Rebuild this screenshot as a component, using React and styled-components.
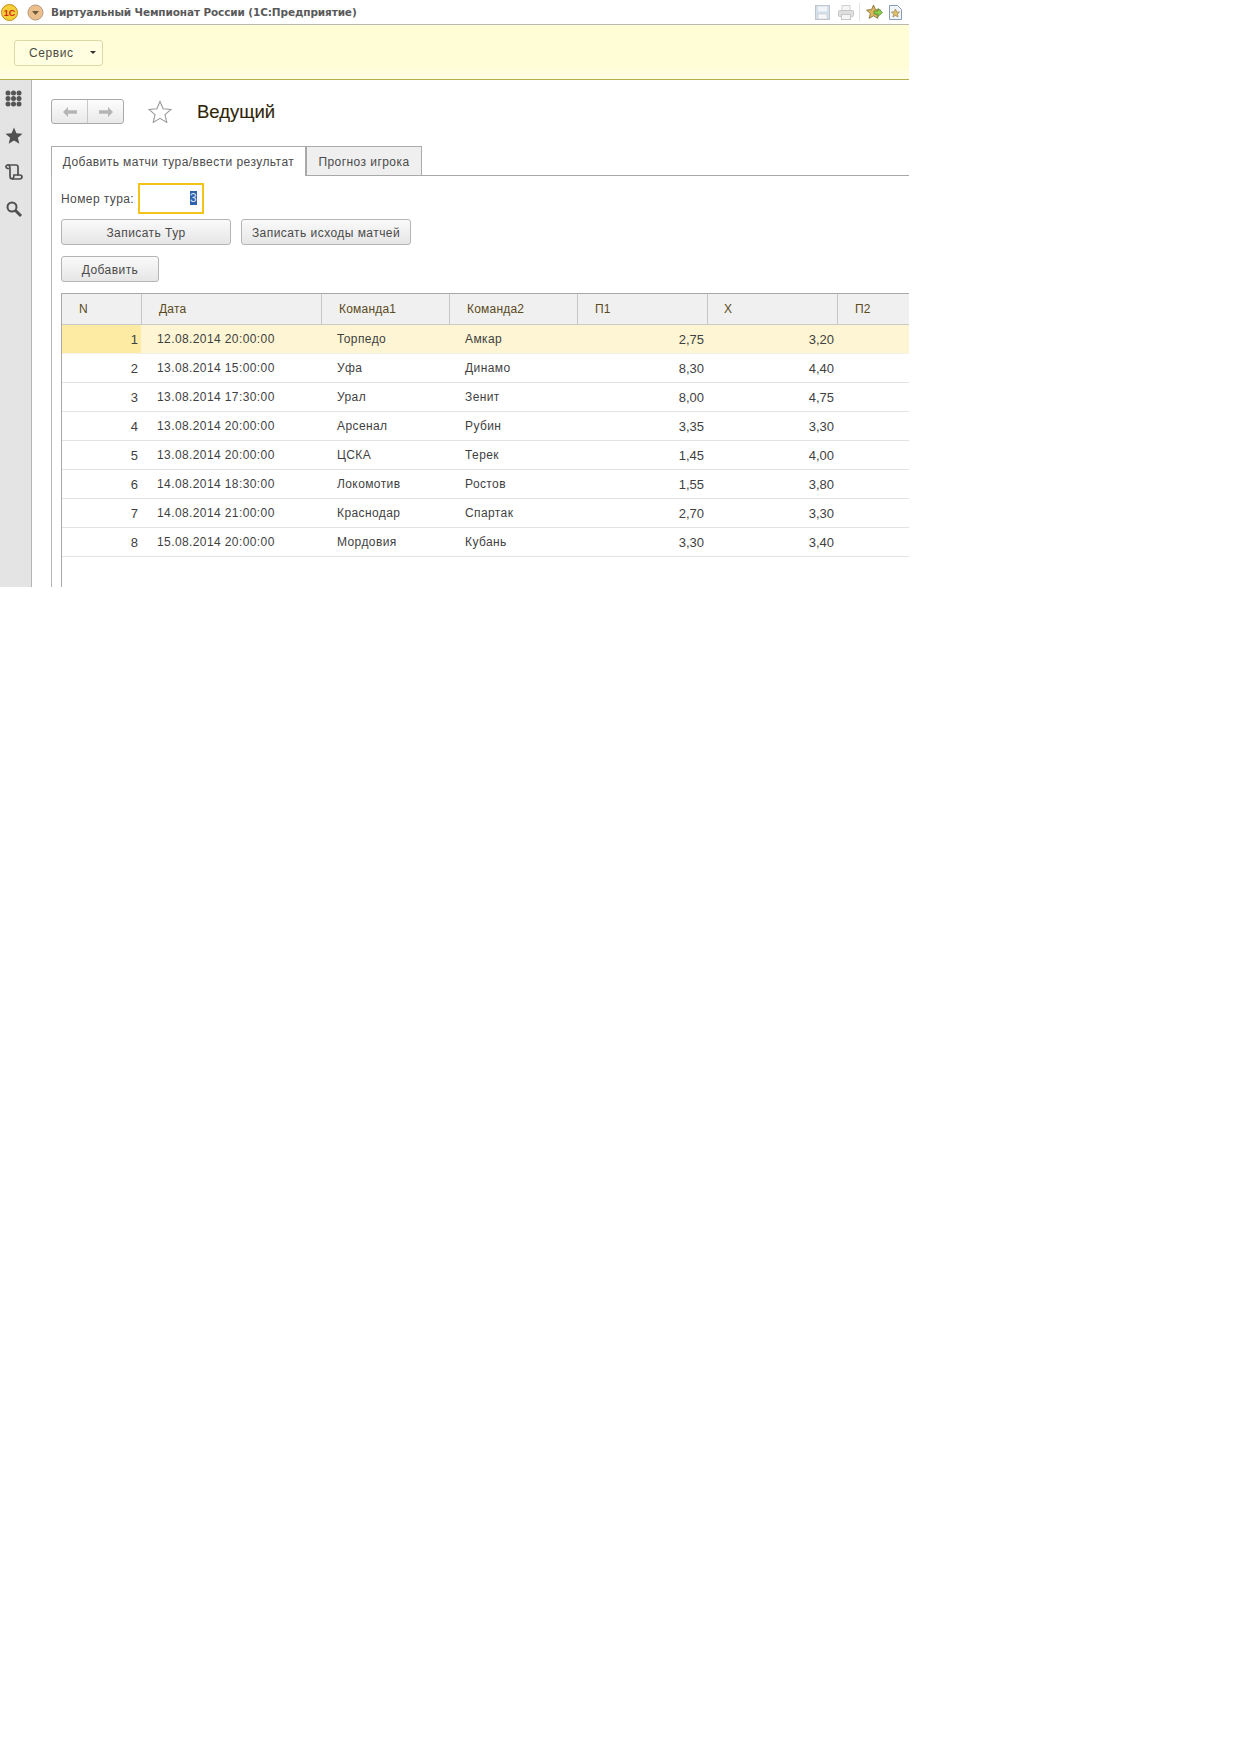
import React from "react";
import styled, { createGlobalStyle } from "styled-components";

const Global = createGlobalStyle`
  html, body { margin: 0; padding: 0; background: #fff; }
  body { font-family: "Liberation Sans", Arial, sans-serif; font-size: 12px; color: #4a4a4a; }
  * { box-sizing: border-box; }
`;
const Shell = styled.div`width: 909px; height: 587px; overflow: hidden; display: flex; flex-direction: column;`;
const TitleBar = styled.div`height: 25px; flex: none; display: flex; align-items: center; border-bottom: 1px solid #b9b9b0; background: #fff;`;
const TitleText = styled.div`margin-left: 7px; padding-bottom: 1px; font: bold 10.5px "DejaVu Sans", sans-serif; letter-spacing: -0.12px; color: #5a5a5a; white-space: nowrap;`;
const TitleLeft = styled.div`display: flex; align-items: center; gap: 9px; padding-left: 1px;`;
const TitleTools = styled.div`margin-left: auto; display: flex; align-items: center; padding-right: 7px;`;
const ToolSlot = styled.span`display: flex; margin-left: ${p => p.$gap}px; opacity: ${p => p.$faint ? 0.75 : 1};`;
const ToolDivider = styled.span`width: 1px; height: 18px; background: #e4e4e4; margin-left: 5px;`;
const CommandBar = styled.div`height: 55px; flex: none; display: flex; align-items: center; padding: 1px 0 0 14px; background: linear-gradient(#fffdd6 0, #fffdd6 75%, #fffee5 100%); border-bottom: 1px solid #b7ae4c;`;
const MenuButton = styled.div`width: 89px; height: 26px; border: 1px solid #dcd9a8; border-radius: 3px; background: #fffee0; display: flex; align-items: center; padding-left: 14px; font-size: 12px; letter-spacing: .6px; color: #4c4c44;`;
const Caret = styled.i`margin-left: 16px; border: 3px solid transparent; border-top: 3px solid #333; border-bottom: 0; width: 0; height: 0;`;
const Body = styled.div`flex: 1; display: flex; min-height: 0;`;
const Side = styled.div`width: 32px; flex: none; background: #e4e4e4; border-right: 1px solid #b4b4b4; display: flex; flex-direction: column; align-items: center; padding: 8px 0 0 0; gap: 17px;`;
const SideIcon = styled.span`display: flex; width: 18px; height: 20px; align-items: center; justify-content: center; margin-right: 4px;`;
const Main = styled.div`flex: 1; min-width: 0; padding: 19px 0 0 19px; display: flex; flex-direction: column;`;
const Header = styled.div`display: flex; align-items: center; height: 25px;`;
const Nav = styled.div`width: 73px; height: 25px; border: 1px solid #a9a9a9; border-radius: 3px; background: linear-gradient(#fdfdfd, #e9e9e9); display: flex;`;
const NavCell = styled.div`flex: 1; display: flex; align-items: center; justify-content: center; & + & { border-left: 1px solid #c8c8c8; }`;
const StarSlot = styled.span`display: flex; margin-left: 24px;`;
const PageTitle = styled.div`margin-left: 25px; padding-top: 1px; font-size: 18.5px; color: #2f2608; -webkit-text-stroke: .1px #2f2608;`;
const Tabs = styled.div`margin-top: 22px; height: 30px; display: flex; border-bottom: 1px solid #a8a8a8; flex: none;`;
const Tab = styled.div`height: ${p => p.$active ? 30 : 29}px; padding-top: 1px; border: 1px solid #ababab; border-left-width: ${p => p.$active ? 1 : 0}px; border-bottom: 0; background: ${p => p.$active ? "#fff" : "#efefef"}; width: ${p => p.$w}px; display: flex; align-items: center; justify-content: center; font-size: 12px; letter-spacing: .44px; color: #4a4a4a; white-space: nowrap; ${p => p.$active ? "border-right: 2px solid #a8a8a8;" : ""}`;
const Panel = styled.div`flex: 1; min-height: 0; border-left: 1px solid #b5b5b5; padding: 7px 0 0 9px; margin-top: 0; display: flex; flex-direction: column;`;
const FieldRow = styled.div`display: flex; align-items: center; height: 30px;`;
const Label = styled.span`font-size: 12px; letter-spacing: .42px; color: #4a4a4a; width: 77px; padding-top: 1px; white-space: nowrap;`;
const Input = styled.div`width: 66px; height: 31px; border: 2px solid #f3c417; display: flex; align-items: center; justify-content: flex-end; padding-right: 5px;`;
const Sel = styled.span`background: #2f62ad; color: #d8e4f5; font-size: 12px; line-height: 14px; width: 7px; overflow: hidden;`;
const Buttons = styled.div`display: flex; gap: 10px; margin-top: ${p => p.$mt}px; flex: none;`;
const Button = styled.div`width: ${p => p.$w}px; height: 26px; border: 1px solid #b4b4b4; border-radius: 3px; background: linear-gradient(#fafafa, #e6e6e6); display: flex; align-items: center; justify-content: center; padding-top: 1px; font-size: 12px; letter-spacing: .45px; color: #4a4a4a; white-space: nowrap;`;
const Grid = styled.div`margin-top: 11px; flex: 1; min-height: 0; border-left: 1px solid #a9a9a9; border-top: 1px solid #a9a9a9; display: flex; flex-direction: column;`;
const cols = "79px 180px 128px 128px 130px 130px 1fr";
const HeadRow = styled.div`display: grid; grid-template-columns: ${cols}; height: 31px; flex: none; background: #f0f0f0; border-bottom: 1px solid #c9c9c9;`;
const HeadCell = styled.div`display: flex; align-items: center; padding-left: ${p => p.$pad}px; font-size: 12px; letter-spacing: .2px; color: #5a4a20; & + & { border-left: 1px solid #c6c6c6; }`;
const Row = styled.div`display: grid; grid-template-columns: ${cols}; height: 29px; flex: none; border-bottom: 1px solid ${p => p.$sel ? "#f0f0e4" : "#e2e2e2"}; background: ${p => p.$sel ? "#fdf5d3" : "#fff"};`;
const Cell = styled.div`display: flex; align-items: center; font-size: 12px; letter-spacing: .4px; color: #3f3f3f; white-space: nowrap; padding-left: ${p => p.$pad || 0}px; ${p => p.$num ? `justify-content: flex-end; padding-right: ${p.$pr}px; font-size: 13px; letter-spacing: 0;` : ""} ${p => p.$mark ? "background: #fdeba3;" : ""}`;
const Cut = styled.div`display: flex; align-items: center;`;

const Logo = () => (
  <svg width="17" height="17" viewBox="0 0 17 17">
    <circle cx="8.5" cy="8.5" r="8" fill="#f5cf3a" stroke="#c08a10" />
    <text x="8.5" y="12" textAnchor="middle" fontSize="9" fontWeight="bold" fontFamily="Liberation Sans" fill="#cf2a10">1С</text>
  </svg>
);
const MenuDot = () => (
  <svg width="17" height="17" viewBox="0 0 17 17">
    <circle cx="8.5" cy="8.5" r="7.5" fill="#ecc08c" stroke="#b39878" />
    <path d="M5 7h7l-3.5 4z" fill="#6a5a40" />
  </svg>
);
const Save = () => (
  <svg width="15" height="15" viewBox="0 0 15 15">
    <rect x=".5" y=".5" width="14" height="14" fill="#c9d6e4" stroke="#a9b4c0" />
    <rect x="3" y="1.5" width="9" height="5" fill="#eef2f6" />
    <rect x="3" y="9" width="9" height="5" fill="#f6f6f6" stroke="#aab" strokeWidth=".5" />
  </svg>
);
const Print = () => (
  <svg width="16" height="15" viewBox="0 0 16 15">
    <rect x="4" y=".5" width="8" height="6" fill="#f4f4f4" stroke="#c0c0c0" />
    <rect x=".5" y="5.5" width="15" height="6" rx="1" fill="#d4d4d4" stroke="#b5b5b5" />
    <rect x="3.5" y="9.5" width="9" height="5" fill="#f2f2f2" stroke="#b5b5b5" />
  </svg>
);
const StarArrow = () => (
  <svg width="17" height="16" viewBox="0 0 17 16">
    <path d="M7.5 1l2 4.6 5 .5-3.8 3.3 1.2 5-4.4-2.6-4.4 2.6 1.2-5L.5 6.100l5-.5z" fill="#e0b75e" stroke="#7a6a30" strokeWidth=".8" />
    <path d="M8 7h4V4.500l4.500 4-4.500 4V10H8z" fill="#8fd24c" stroke="#4a7a28" strokeWidth=".7" />
  </svg>
);
const DocStar = () => (
  <svg width="13" height="15" viewBox="0 0 13 15">
    <path d="M.5.5h8l4 4v10H.5z" fill="#f2f5fa" stroke="#8a9bb5" />
    <path d="M6.500 4l1.200 2.800 3 .3-2.300 2 .7 3-2.600-1.600L3.900 12.100l.7-3-2.300-2 3-.3z" fill="#e0bd6a" stroke="#7a6a30" strokeWidth=".5" />
  </svg>
);
const GridIcon = () => (
  <svg width="17" height="17" viewBox="0 0 17 17" fill="#555">
    {[3, 8.5, 14].flatMap(y => [3, 8.5, 14].map(x => <circle key={`${x}-${y}`} cx={x} cy={y} r="2.500" />))}
  </svg>
);
const FilledStar = () => (
  <svg width="18" height="17" viewBox="0 0 18 17">
    <path d="M9 .5l2.400 5.700 6.100.5-4.600 4 1.400 6L9 13.500 3.700 16.700l1.400-6-4.600-4 6.100-.5z" fill="#505050" />
  </svg>
);
const Scroll = () => (
  <svg width="18" height="18" viewBox="0 0 18 18" fill="none" stroke="#505050" strokeWidth="1.700" strokeLinecap="round">
    <path d="M3 2h8c1.200 0 2 .8 2 2v8" />
    <path d="M3 2C1.800 2 1 2.900 1 3.800 1 4.800 2 5.500 3.500 5.500" />
    <path d="M3.800 2.300C4.800 3 5 4 5 5v8c0 1.700 1 3 2.500 3h7c1.400 0 2.500-.9 2.500-2.200 0-1.200-1-1.800-2.200-1.800H9c0 1.500 0 3-1.500 4" />
  </svg>
);
const Search = () => (
  <svg width="18" height="18" viewBox="0 0 18 18" fill="none" stroke="#505050">
    <circle cx="7" cy="7" r="4.500" strokeWidth="2" />
    <path d="M10.500 10.500L16 16" strokeWidth="3" />
  </svg>
);
const Arrow = ({ flip }) => (
  <svg width="16" height="12" viewBox="0 0 16 12" style={flip ? { transform: "scaleX(-1)" } : undefined}>
    <path d="M1 6l5-5v3.200h9v3.600H6V11z" fill="#b5b5b5" />
  </svg>
);
const HollowStar = () => (
  <svg width="24" height="23" viewBox="0 0 24 23">
    <path d="M12 1.500l3.100 7.300 7.900.7-6 5.200 1.800 7.700L12 18.300l-6.800 4.100L7 14.700 1 9.500l7.900-.7z" fill="#fff" stroke="#9a9a9a" strokeWidth="1.100" />
  </svg>
);

const heads = [["N", 17], ["Дата", 17], ["Команда1", 17], ["Команда2", 17], ["П1", 17], ["X", 16], ["П2", 17]];
const rows = [
  ["1", "12.08.2014 20:00:00", "Торпедо", "Амкар", "2,75", "3,20"],
  ["2", "13.08.2014 15:00:00", "Уфа", "Динамо", "8,30", "4,40"],
  ["3", "13.08.2014 17:30:00", "Урал", "Зенит", "8,00", "4,75"],
  ["4", "13.08.2014 20:00:00", "Арсенал", "Рубин", "3,35", "3,30"],
  ["5", "13.08.2014 20:00:00", "ЦСКА", "Терек", "1,45", "4,00"],
  ["6", "14.08.2014 18:30:00", "Локомотив", "Ростов", "1,55", "3,80"],
  ["7", "14.08.2014 21:00:00", "Краснодар", "Спартак", "2,70", "3,30"],
  ["8", "15.08.2014 20:00:00", "Мордовия", "Кубань", "3,30", "3,40"],
];

export default function App() {
  return (
    <>
      <Global />
      <Shell>
        <TitleBar>
          <TitleLeft><Logo /><MenuDot /></TitleLeft>
          <TitleText>Виртуальный Чемпионат России (1С:Предприятие)</TitleText>
          <TitleTools>
            <ToolSlot $gap={0} $faint><Save /></ToolSlot>
            <ToolSlot $gap={8} $faint><Print /></ToolSlot>
            <ToolDivider />
            <ToolSlot $gap={6}><StarArrow /></ToolSlot>
            <ToolSlot $gap={6}><DocStar /></ToolSlot>
          </TitleTools>
        </TitleBar>
        <CommandBar>
          <MenuButton>Сервис<Caret /></MenuButton>
        </CommandBar>
        <Body>
          <Side>
            <SideIcon><GridIcon /></SideIcon>
            <SideIcon><FilledStar /></SideIcon>
            <SideIcon><Scroll /></SideIcon>
            <SideIcon><Search /></SideIcon>
          </Side>
          <Main>
            <Header>
              <Nav>
                <NavCell><Arrow /></NavCell>
                <NavCell><Arrow flip /></NavCell>
              </Nav>
              <StarSlot><HollowStar /></StarSlot>
              <PageTitle>Ведущий</PageTitle>
            </Header>
            <Tabs>
              <Tab $active $w={256}>Добавить матчи тура/ввести результат</Tab>
              <Tab $w={115}>Прогноз игрока</Tab>
            </Tabs>
            <Panel>
              <FieldRow>
                <Label>Номер тура:</Label>
                <Input><Sel>3</Sel></Input>
              </FieldRow>
              <Buttons $mt={6}>
                <Button $w={170}>Записать Тур</Button>
                <Button $w={170}>Записать исходы матчей</Button>
              </Buttons>
              <Buttons $mt={11}>
                <Button $w={98}>Добавить</Button>
              </Buttons>
              <Grid>
                <HeadRow>
                  {heads.map(([h, pad]) => <HeadCell key={h} $pad={pad}>{h}</HeadCell>)}
                </HeadRow>
                {rows.map((r, i) => (
                  <Row key={r[0]} $sel={i === 0}>
                    <Cell $num $pr={3} $mark={i === 0}>{r[0]}</Cell>
                    <Cell $pad={16}>{r[1]}</Cell>
                    <Cell $pad={16}>{r[2]}</Cell>
                    <Cell $pad={16}>{r[3]}</Cell>
                    <Cell $num $pr={3}>{r[4]}</Cell>
                    <Cell $num $pr={3}>{r[5]}</Cell>
                    <Cut />
                  </Row>
                ))}
              </Grid>
            </Panel>
          </Main>
        </Body>
      </Shell>
    </>
  );
}
